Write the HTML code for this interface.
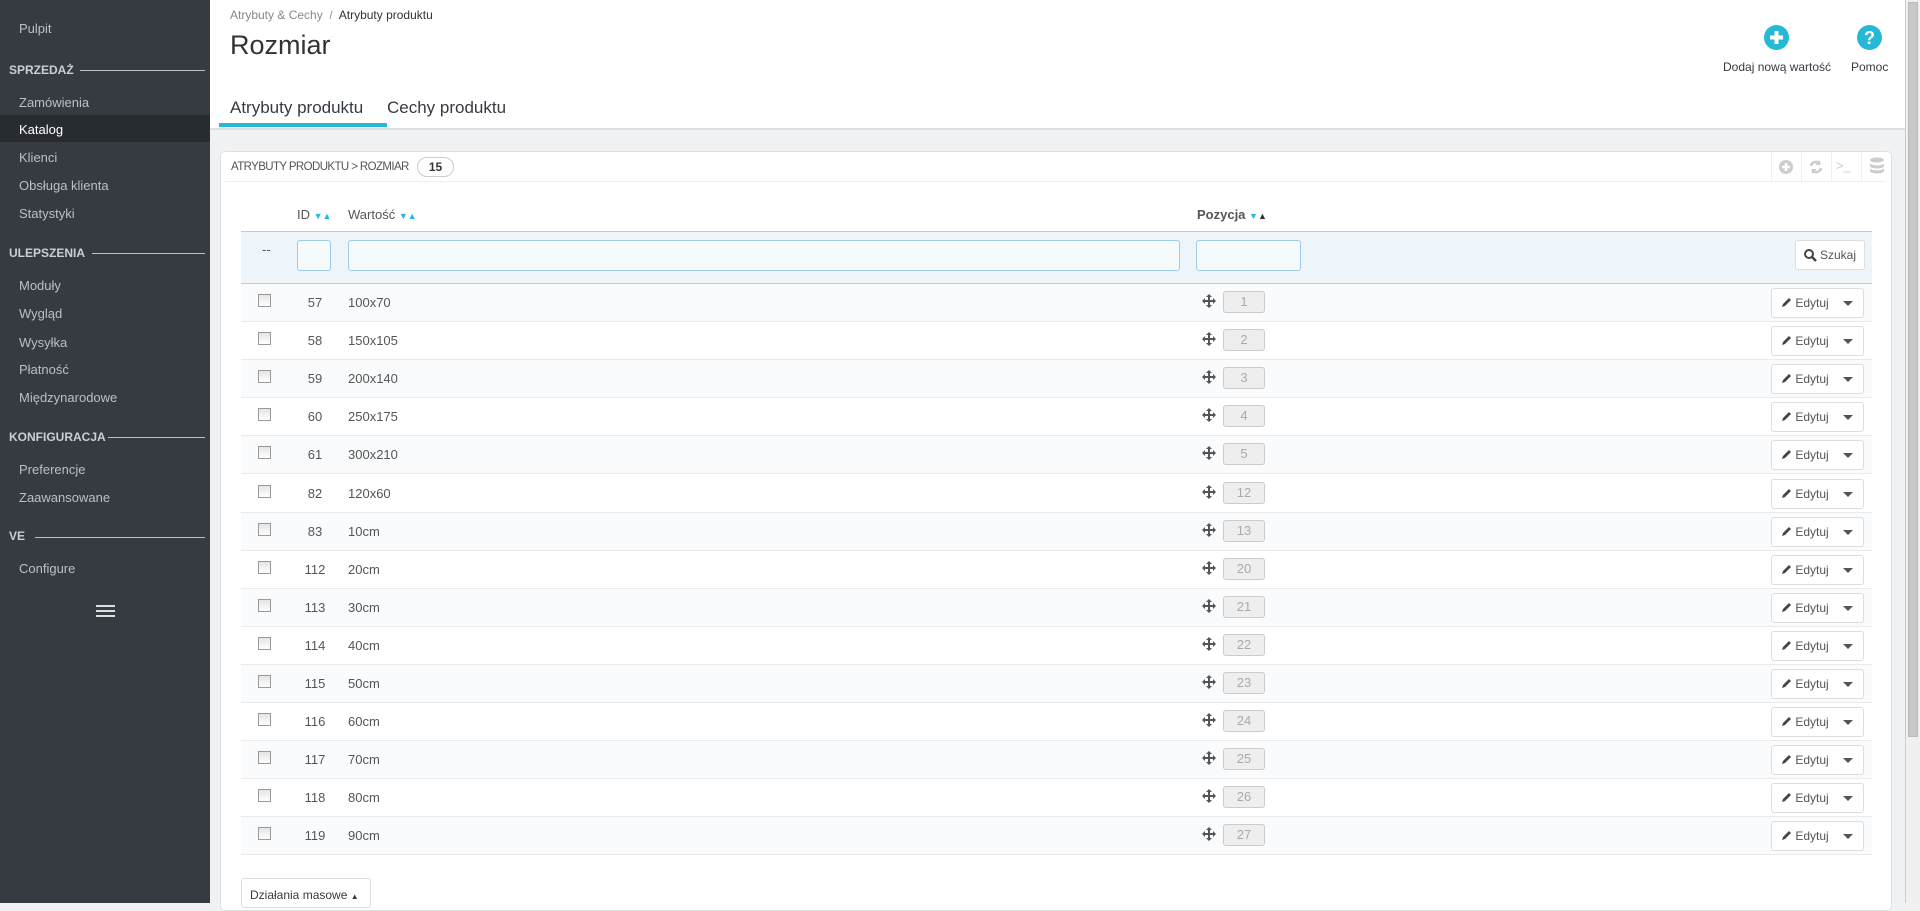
<!DOCTYPE html>
<html><head><meta charset="utf-8"><style>
*{box-sizing:border-box;margin:0;padding:0}
body{width:1920px;height:903px;overflow:hidden;font-family:"Liberation Sans",sans-serif;font-size:13px;color:#555;background:#eff1f2;position:relative}
.sb{position:absolute;left:0;top:0;width:210px;height:903px;background:#363a41}
.sb .it{position:absolute;left:19px;color:#bcc0c5;font-size:13px}
.sb .act{position:absolute;left:0;width:210px;height:27px;top:115px;background:#282b30}
.sb .hd{position:absolute;left:9px;color:#cbd0d5;font-weight:bold;font-size:12px}
.sb .ln{position:absolute;height:1px;background:#bcc0c5;right:5px}
.top{position:absolute;left:210px;top:0;width:1695px;height:130px;background:#fff;border-bottom:2px solid #dde0e3}
.abs{position:absolute}
.panel{position:absolute;left:220px;top:151px;width:1672px;height:760px;background:#fff;border:1px solid #dde0e3;border-radius:5px}
.row{position:absolute;left:241px;width:1631px;height:38px;border-bottom:1px solid #e8eaec}
.row.o{background:#fafbfc}
.cb{position:absolute;left:17px;top:10px;width:13px;height:13px;border:1px solid #999;background:linear-gradient(#e4e4e4,#fff)}
.id{position:absolute;left:50px;width:48px;text-align:center;top:11px}
.val{position:absolute;left:107px;top:11px}
.mv{position:absolute;left:961px;top:10px}
.pos{position:absolute;left:982px;top:7px;width:42px;height:22px;border:1px solid #ccc;border-radius:3px;background:#eee;color:#aaa;text-align:center;line-height:20px;font-size:13px}
.ed{position:absolute;left:1530px;top:4px;width:93px;height:30px;border:1px solid #ddd;border-radius:3px;background:#fff;color:#555;font-size:12px;line-height:28px;padding-left:9px}
.ed .car{position:absolute;right:10px;top:12px;border-left:5px solid transparent;border-right:5px solid transparent;border-top:5px solid #555}
</style></head><body>
<div class="sb">
<div class="it" style="top:21px">Pulpit</div>
<div class="hd" style="top:63px">SPRZEDAŻ</div><div class="ln" style="top:70px;left:80px"></div>
<div class="it" style="top:95px">Zamówienia</div>
<div class="act"></div>
<div class="it" style="top:122px;color:#fff">Katalog</div>
<div class="it" style="top:150px">Klienci</div>
<div class="it" style="top:178px">Obsługa klienta</div>
<div class="it" style="top:206px">Statystyki</div>
<div class="hd" style="top:246px">ULEPSZENIA</div><div class="ln" style="top:253px;left:92px"></div>
<div class="it" style="top:278px">Moduły</div>
<div class="it" style="top:306px">Wygląd</div>
<div class="it" style="top:335px">Wysyłka</div>
<div class="it" style="top:362px">Płatność</div>
<div class="it" style="top:390px">Międzynarodowe</div>
<div class="hd" style="top:430px">KONFIGURACJA</div><div class="ln" style="top:437px;left:108px"></div>
<div class="it" style="top:462px">Preferencje</div>
<div class="it" style="top:490px">Zaawansowane</div>
<div class="hd" style="top:529px">VE</div><div class="ln" style="top:537px;left:35px"></div>
<div class="it" style="top:561px">Configure</div>
<div class="abs" style="left:96px;top:605px;width:19px;height:2px;background:#ddd;box-shadow:0 5px 0 #ddd,0 10px 0 #ddd"></div>
</div>
<div class="top">
<div class="abs" style="left:20px;top:8px;font-size:12px;color:#888">Atrybuty &amp; Cechy &nbsp;<span style="color:#999">/</span>&nbsp; <span style="color:#333">Atrybuty produktu</span></div>
<div class="abs" style="left:20px;top:30px;font-size:27px;color:#333">Rozmiar</div>
<div class="abs" style="left:20px;top:98px;font-size:17px;color:#363a41">Atrybuty produktu</div>
<div class="abs" style="left:9px;top:123px;width:168px;height:4px;background:#25b9d7"></div>
<div class="abs" style="left:177px;top:98px;font-size:17px;color:#363a41">Cechy produktu</div>
<svg class="abs" style="left:1554px;top:25px" width="25" height="25"><circle cx="12.5" cy="12.5" r="12.5" fill="#25b9d7"/><path d="M12.5 6v13M6 12.5h13" stroke="#fff" stroke-width="4"/></svg>
<div class="abs" style="left:1513px;top:60px;font-size:12px;color:#363a41">Dodaj nową wartość</div>
<svg class="abs" style="left:1647px;top:25px" width="25" height="25"><circle cx="12.5" cy="12.5" r="12.5" fill="#25b9d7"/><text x="12.5" y="19" text-anchor="middle" font-family="Liberation Sans" font-weight="bold" font-size="18" fill="#fff">?</text></svg>
<div class="abs" style="left:1641px;top:60px;font-size:12px;color:#363a41">Pomoc</div>
</div>
<div class="abs" style="left:1905px;top:0;width:15px;height:903px;background:#f0f0f0;border-left:1px solid #ccc"><div style="position:absolute;left:2px;top:2px;width:10px;height:735px;background:#c8c8c8;border:1px solid #bbb"></div></div>
<div class="panel">
<div class="abs" style="left:10px;top:9px;font-size:11.5px;color:#555;letter-spacing:-0.6px">ATRYBUTY PRODUKTU &gt; ROZMIAR</div>
<div class="abs" style="left:196px;top:5px;width:37px;height:20px;border:1px solid #ccc;border-radius:10px;text-align:center;font-weight:bold;font-size:12px;line-height:18px;color:#333">15</div>
<div class="abs" style="left:4px;top:29px;width:1660px;height:1px;background:#eee"></div>
<div class="abs" style="left:1550px;top:0;width:1px;height:29px;background:#eee"></div>
<div class="abs" style="left:1580px;top:0;width:1px;height:29px;background:#eee"></div>
<div class="abs" style="left:1610px;top:0;width:1px;height:29px;background:#eee"></div>
<div class="abs" style="left:1640px;top:0;width:1px;height:29px;background:#eee"></div>
<svg class="abs" style="left:1557px;top:7px" width="16" height="16"><circle cx="8" cy="8" r="7" fill="#ccc"/><path d="M8 4v8M4 8h8" stroke="#fff" stroke-width="2.5"/></svg>
<svg class="abs" style="left:1587px;top:7px" width="16" height="16"><path d="M3 7a5 5 0 0 1 9-2M13 9a5 5 0 0 1-9 2" stroke="#ccc" stroke-width="2.5" fill="none"/><path d="M12 1v5h-5zM4 15v-5h5z" fill="#ccc"/></svg>
<div class="abs" style="left:1615px;top:6px;color:#ccc;font-size:13px">&gt;_</div>
<svg class="abs" style="left:1648px;top:5px" width="16" height="20"><ellipse cx="8" cy="3" rx="7" ry="2.5" fill="#ccc"/><path d="M1 6a7 2.5 0 0 0 14 0v3a7 2.5 0 0 1-14 0zM1 11a7 2.5 0 0 0 14 0v3a7 2.5 0 0 1-14 0z" fill="#ccc"/></svg>
</div>
<div class="abs" style="left:297px;top:207px;color:#555">ID <span style="color:#25b9d7;font-size:9px">▼</span><span style="color:#25b9d7;font-size:9px">▲</span></div>
<div class="abs" style="left:348px;top:207px;color:#555">Wartość <span style="color:#25b9d7;font-size:9px">▼</span><span style="color:#25b9d7;font-size:9px">▲</span></div>
<div class="abs" style="left:1197px;top:207px;color:#555;font-weight:bold">Pozycja <span style="color:#25b9d7;font-size:9px">▼</span><span style="color:#333;font-size:9px">▲</span></div>
<div class="abs" style="left:241px;top:231px;width:1631px;height:53px;background:#edf5fb;border-top:1px solid #a6d2ec;border-bottom:1px solid #a6d2ec">
<div class="abs" style="left:21px;top:10px">--</div>
<div class="abs" style="left:56px;top:8px;width:34px;height:31px;border:1px solid #9fcbe6;border-radius:3px;background:#f5fafd"></div>
<div class="abs" style="left:107px;top:8px;width:832px;height:31px;border:1px solid #9fcbe6;border-radius:3px;background:#f5fafd"></div>
<div class="abs" style="left:955px;top:8px;width:105px;height:31px;border:1px solid #9fcbe6;border-radius:3px;background:#f5fafd"></div>
<div class="abs" style="left:1554px;top:8px;width:70px;height:30px;border:1px solid #ddd;border-radius:3px;background:#fff;color:#555;font-size:12px;line-height:28px;padding-left:24px">Szukaj<svg style="position:absolute;left:8px;top:8px" width="13" height="13"><circle cx="5" cy="5" r="4" stroke="#444" stroke-width="2" fill="none"/><path d="M8 8l4 4" stroke="#444" stroke-width="2.5"/></svg></div>
</div>
<div id="rows"></div>
<div class="abs" style="left:241px;top:878px;width:130px;height:30px;border:1px solid #ddd;border-radius:3px;background:#fff;color:#363a41;font-size:12px;padding:9px 0 0 8px">Działania masowe <span style="font-size:8px">▲</span></div>
<script>
var d=[[57,'100x70',1],[58,'150x105',2],[59,'200x140',3],[60,'250x175',4],[61,'300x210',5],[82,'120x60',12],[83,'10cm',13],[112,'20cm',20],[113,'30cm',21],[114,'40cm',22],[115,'50cm',23],[116,'60cm',24],[117,'70cm',25],[118,'80cm',26],[119,'90cm',27]];
var h='';
d.forEach(function(r,i){h+='<div class="row'+(i%2==0?' o':'')+'" style="top:'+(284+i*38.1)+'px"><div class="cb"></div><div class="id">'+r[0]+'</div><div class="val">'+r[1]+'</div><svg class="mv" width="14" height="14"><path d="M7 0l3 3H8v3h3V4l3 3-3 3V8H8v3h2l-3 3-3-3h2V8H3v2L0 7l3-3v2h3V3H4z" fill="#555"/></svg><div class="pos">'+r[2]+'</div><div class="ed"><svg width="11" height="11" style="vertical-align:-1px"><path d="M1 10l1-3 6-6 2 2-6 6z" fill="#444"/></svg> Edytuj<span class="car"></span></div></div>'});
document.getElementById('rows').innerHTML=h;
</script>
</body></html>
